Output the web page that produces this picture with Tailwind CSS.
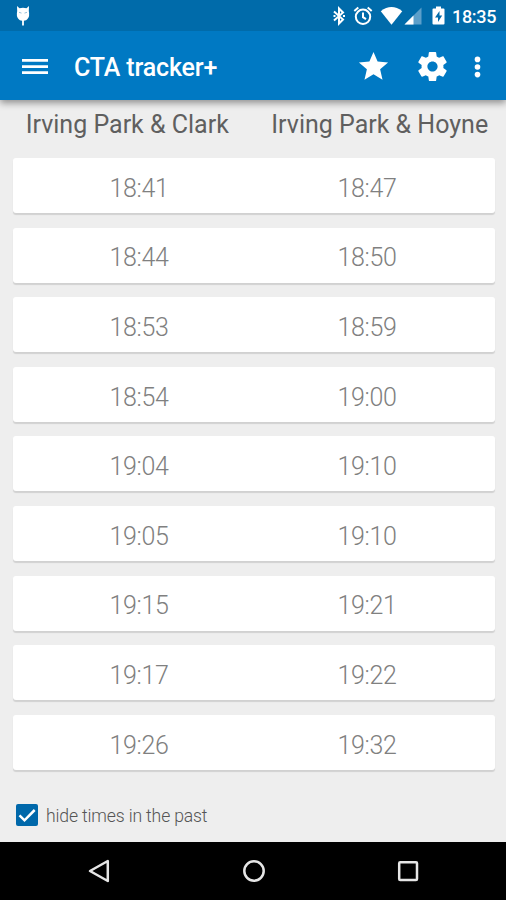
<!DOCTYPE html>
<html lang="en">
<head>
<meta charset="utf-8">
<title>CTA tracker+</title>
<script src="https://cdn.jsdelivr.net/npm/@tailwindcss/browser@4"></script>
</head>
<body class="w-[506px] h-[900px] overflow-hidden bg-[#eeeeee] font-['Roboto',sans-serif] flex flex-col">
<header class="shrink-0 h-[100px] flex flex-col bg-[#0079c3] relative shadow-[0_3px_7px_rgba(0,0,0,0.4)]">
  <div class="h-[31px] bg-[#006baa] flex items-center text-white pl-[15px] pr-[9px]">
    <svg class="w-4 h-[22px]" viewBox="0 0 16 22" fill="#fff"><path d="M2 1 L4.500 3.200 Q8 2.300 11.500 3.200 L14 1 L13.800 6 Q15 11 12.500 14 Q11.500 15.500 8.900 15.700 V20.500 H7.100 V15.700 Q4.500 15.500 3.500 14 Q1 11 2.200 6 Z"/><path d="M4 7.300 l2.500 .8 M12 7.300 l-2.500 .8" stroke="#7fb1d2" stroke-width=".8"/></svg>
    <div class="ml-auto flex items-center">
      <svg class="w-[14px] h-[20px]" viewBox="0 0 14 20" fill="none" stroke="#fff" stroke-width="2"><path d="M2 5.500 L11 13.500 L7 17.500 V2.500 L11 6.500 L2 14.500"/><path d="M1.500 10h2M11 10h2" stroke-width="2"/></svg>
      <svg class="w-[20px] h-[20px] ml-[7px]" viewBox="0 0 20 20" fill="none" stroke="#fff" stroke-width="2"><circle cx="10" cy="10.800" r="7.200"/><path d="M10 6.500v4.700l3 2M1.300 5l4-3.400M18.700 5l-4-3.400"/></svg>
      <svg class="w-[23px] h-[18px] ml-[7px]" viewBox="0 0 24 18" preserveAspectRatio="none" fill="#fff"><path d="M.8 4.200 Q12-4 23.200 4.200 L12 17.800Z"/></svg>
      <svg class="w-[18px] h-[18px] ml-[1px]" viewBox="0 0 18 18"><path d="M17.500 .5V17.500H.5Z" fill="#5c9fca"/><path d="M9.500 8.500V17.500H.5Z" fill="#fff"/></svg>
      <svg class="w-[13px] h-[19px] ml-[10px]" viewBox="0 0 13 19"><path d="M4 .5h5v2h2.500q1 0 1 1v14q0 1-1 1h-10q-1 0-1-1v-14q0-1 1-1H4Z" fill="#fff"/><path d="M7.500 5L3 11.500h3V16l4.200-6.500H7.500Z" fill="#006baa"/></svg>
      <span class="ml-[7px] mt-[2px] text-[18px] leading-[22px] font-medium tracking-[-0.3px] w-[45px] whitespace-nowrap">18:35</span>
    </div>
  </div>
  <div class="flex-1 flex items-center pl-[22px] text-white pt-[2px]">
    <svg class="w-[26px] h-[18px]" viewBox="0 0 26 18" fill="#fff"><path d="M0 1.100h26v2.700H0zM0 7.200h26v2.700H0zM0 13.300h26v2.700H0z"/></svg>
    <h1 class="ml-[26px] pt-[2px] text-[25px] leading-[30px] font-medium tracking-[-0.150px] whitespace-nowrap">CTA tracker+</h1>
    <svg class="ml-auto w-[35px] h-[35px]" viewBox="0 0 24 24" fill="#fff"><path d="M12 17.270 18.180 21l-1.640-7.030L22 9.240l-7.190-.61L12 2 9.190 8.630 2 9.240l5.460 4.730L5.820 21z"/></svg>
    <svg class="ml-[24px] w-[35px] h-[35px]" viewBox="0 0 24 24" fill="#fff"><path d="M19.430 12.980c.04-.32.070-.64.070-.98s-.03-.66-.07-.98l2.110-1.650c.19-.15.240-.42.120-.64l-2-3.460c-.12-.22-.39-.3-.61-.22l-2.490 1c-.52-.4-1.080-.73-1.690-.98l-.38-2.650C14.460 2.180 14.250 2 14 2h-4c-.25 0-.46.180-.49.420l-.38 2.650c-.61.250-1.170.590-1.690.980l-2.490-1c-.23-.09-.49 0-.61.220l-2 3.460c-.13.220-.07.490.120.640l2.110 1.650c-.04.320-.07.650-.07.980s.03.660.070.980l-2.110 1.650c-.19.150-.24.420-.12.640l2 3.460c.12.220.39.300.610.220l2.490-1c.52.400 1.080.730 1.690.980l.38 2.650c.03.240.24.420.490.420h4c.25 0 .46-.18.490-.42l.38-2.650c.61-.25 1.170-.59 1.690-.98l2.490 1c.23.090.490 0 .610-.22l2-3.460c.12-.22.070-.49-.12-.64zM12 15.500c-1.930 0-3.500-1.570-3.500-3.500s1.570-3.500 3.500-3.500 3.500 1.570 3.500 3.500-1.570 3.500-3.500 3.500z"/></svg>
    <svg class="ml-[24px] mr-[25px] w-[7px] h-[22px]" viewBox="0 0 7 22" fill="#fff"><circle cx="3.500" cy="3.400" r="2.800"/><circle cx="3.500" cy="11" r="2.800"/><circle cx="3.500" cy="18.600" r="2.800"/></svg>
  </div>
</header>
<main class="flex-1 flex flex-col">
  <div class="grid grid-cols-2 text-center text-[25px] leading-[30px] text-[#5f5f5f] mt-[10px] pl-px whitespace-nowrap">
    <h2>Irving Park &amp; Clark</h2><h2>Irving Park &amp; Hoyne</h2>
  </div>
  <ul id="times" class="mt-[18px] ml-[12.500px] mr-[11.500px] flex flex-col gap-[14.600px]"></ul>
  <label class="flex items-center mt-[33px] ml-[15.500px] text-[17.600px] leading-[22px] font-light tracking-[-0.150px] text-[#555]">
    <svg class="w-[22px] h-[22px] mr-[8.500px]" viewBox="0 0 22 22"><rect width="22" height="22" rx="2" fill="#0068aa"/><path d="M3.500 11.300l5 5L18.700 6" fill="none" stroke="#fff" stroke-width="2.500"/></svg>
    <span class="whitespace-nowrap pt-[2px]">hide times in the past</span>
  </label>
</main>
<nav class="shrink-0 h-[58px] bg-black flex items-center justify-between pl-[87px] pr-[86px]">
  <svg class="w-[24px] h-[26px]" viewBox="0 0 24 26" fill="none" stroke="#e6e6e6" stroke-width="2.500" stroke-linejoin="round"><path d="M20.800 3v20L3 13Z"/></svg>
  <svg class="w-[24px] h-[24px]" viewBox="0 0 24 24" fill="none" stroke="#e6e6e6" stroke-width="2.500"><circle cx="12" cy="12" r="9.700"/></svg>
  <svg class="w-[24px] h-[24px]" viewBox="0 0 24 24" fill="none" stroke="#e6e6e6" stroke-width="2.500"><rect x="3.200" y="3.200" width="17.800" height="17.800" rx="1"/></svg>
</nav>
<script>
const rows = [["18:41","18:47"],["18:44","18:50"],["18:53","18:59"],["18:54","19:00"],["19:04","19:10"],["19:05","19:10"],["19:15","19:21"],["19:17","19:22"],["19:26","19:32"]];
document.getElementById("times").innerHTML = rows.map(([a, b]) =>
  `<li class="h-[55px] bg-white rounded-[3px] shadow-[0_2px_1px_rgba(0,0,0,0.12)] pl-[12.500px] pr-[13.500px] pt-[6px] grid grid-cols-2 items-center text-center text-[25px] font-light tracking-[-0.3px] text-[#808080]"><span>${a}</span><span>${b}</span></li>`).join("");
</script>
</body>
</html>
